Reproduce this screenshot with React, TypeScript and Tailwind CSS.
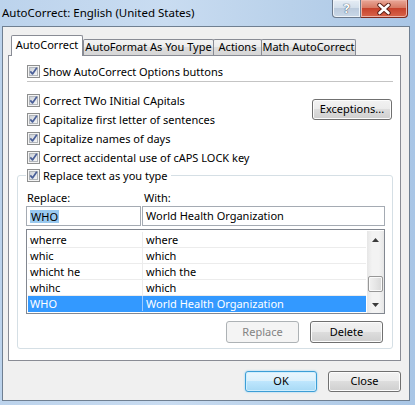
import React from "react";

function Check({ checked = true }: { checked?: boolean }) {
  return (
    <svg width="13" height="13" viewBox="0 0 13 13" className="shrink-0 block">
      <defs>
        <linearGradient id="cbg" x1="0" y1="0" x2="1" y2="1">
          <stop offset="0" stopColor="#cbcfd5" />
          <stop offset="1" stopColor="#f7f8f9" />
        </linearGradient>
      </defs>
      <rect x="0.5" y="0.5" width="12" height="12" fill="#f4f4f4" stroke="#8e8f8f" />
      <rect x="2.5" y="2.5" width="8" height="8" fill="url(#cbg)" stroke="#b1b5ba" />
      {checked && (
        <path d="M3.3 6.4 L5.5 8.9 L9.8 2.8" fill="none" stroke="#4a5f98" strokeWidth="1.7" strokeLinejoin="round" />
      )}
    </svg>
  );
}

function CheckRow({ label }: { label: string }) {
  return (
    <div className="h-[19px] flex items-center gap-[3px]">
      <Check />
      <span className="leading-none">{label}</span>
    </div>
  );
}

const btn =
  "flex items-center justify-center rounded-[3px] border border-[#707070] bg-[linear-gradient(#f2f2f2,#ebebeb_50%,#dddddd_50%,#cfcfcf)] shadow-[inset_0_0_0_1px_#fcfcfc] text-black";

export default function App() {
  const rows = [
    ["wherre", "where"],
    ["whic", "which"],
    ["whicht he", "which the"],
    ["whihc", "which"],
    ["WHO", "World Health Organization"],
  ];
  return (
    <div className="w-[415px] h-[405px] overflow-hidden bg-[linear-gradient(90deg,#bcd3ec,#c9dcf1_40%,#b9d1ea_70%,#a9c6e6)] font-['Noto_Sans'] text-[11px] text-black flex flex-col">
      {/* title bar */}
      <div className="h-[26px] shrink-0 flex items-start">
        <div className="pl-[2px] pt-[6px] text-[11.5px] leading-[14px] text-black">
          AutoCorrect: English (United States)
        </div>
        <div className="ml-auto mr-[7px] flex">
          <div className="w-[29px] h-[18px] rounded-bl-[4px] border border-t-0 border-[#6b7a8d] bg-[linear-gradient(#e6edf5,#d3dfeb_45%,#bccbdd_50%,#c9d8e8)] flex items-center justify-center shadow-[inset_0_0_0_1px_#eef3f8]">
            <span className="text-[13px] font-bold leading-none text-white [text-shadow:0_0_1px_#3a4a5e,0_0_1px_#3a4a5e]">?</span>
          </div>
          <div className="w-[47px] h-[18px] rounded-br-[4px] border border-t-0 border-l-0 border-[#7e2a1d] bg-[linear-gradient(#e9a898,#d77a64_45%,#c7432c_50%,#d8654b)] flex items-center justify-center shadow-[inset_0_0_0_1px_#eeb3a5]">
            <svg width="16" height="12" viewBox="0 0 16 12">
              <path d="M3.5 2 L12.5 10 M12.5 2 L3.5 10" stroke="#5a1e14" strokeWidth="4.4" strokeLinecap="round" />
              <path d="M3.5 2 L12.5 10 M12.5 2 L3.5 10" stroke="#ffffff" strokeWidth="2.6" strokeLinecap="round" />
            </svg>
          </div>
        </div>
      </div>

      {/* client area */}
      <div className="ml-[2px] w-[408px] h-[375px] shrink-0 border border-[#6f7f91] bg-[#f0f0f0] flex flex-col pt-[8px] pl-[5px]">
        {/* tabs */}
        <div className="h-[20px] flex items-end pl-[3px]">
          <div className="relative z-10 w-[72px] h-[21px] -mb-px border border-b-0 border-[#898c95] rounded-t-[2px] bg-white flex items-center justify-center pb-[2px]">
            AutoCorrect
          </div>
          <div className="w-[131px] h-[16px] border border-b-0 border-[#898c95] rounded-t-[2px] bg-[linear-gradient(#f3f3f3,#ebebeb_50%,#dddddd_50%,#d6d6d6)] flex items-center justify-center">
            AutoFormat As You Type
          </div>
          <div className="-ml-px w-[49px] h-[16px] border border-b-0 border-[#898c95] rounded-t-[2px] bg-[linear-gradient(#f3f3f3,#ebebeb_50%,#dddddd_50%,#d6d6d6)] flex items-center justify-center">
            Actions
          </div>
          <div className="-ml-px w-[95px] h-[16px] border border-b-0 border-[#898c95] rounded-t-[2px] bg-[linear-gradient(#f3f3f3,#ebebeb_50%,#dddddd_50%,#d6d6d6)] flex items-center justify-center">
            Math AutoCorrect
          </div>
        </div>

        {/* panel */}
        <div className="w-[393px] h-[306px] border border-[#898c95] bg-white flex flex-col">
          <div className="mt-[9px] pl-[18px] h-[13px] flex items-center gap-[3px]">
            <Check />
            <span className="leading-none">Show AutoCorrect Options buttons</span>
          </div>
          <div className="mt-[3px] ml-[18px] w-[366px] h-px bg-[#c4c4c4]" />

          <div className="mt-[9px] flex">
            <div className="pl-[18px] flex flex-col">
              <CheckRow label="Correct TWo INitial CApitals" />
              <CheckRow label="Capitalize first letter of sentences" />
              <CheckRow label="Capitalize names of days" />
              <CheckRow label="Correct accidental use of cAPS LOCK key" />
            </div>
            <div className={`${btn} ml-auto mr-[8px] mt-[8px] w-[80px] h-[21px]`}>Exceptions...</div>
          </div>

          <fieldset className="ml-[8px] w-[376px] h-[182px] border border-[#d5dfe5] rounded-[3px] p-0 m-0 min-w-0 flex flex-col">
            <legend className="ml-[8px] pl-[1px] pr-[3px] h-[16px] flex items-center gap-[3px] bg-white">
              <Check />
              <span className="leading-none">Replace text as you type</span>
            </legend>
            <div className="mt-[7px] ml-[8px] h-[14px] flex items-center">
              <span className="w-[116px] pl-[1px] leading-none">Replace:</span>
              <span className="pl-[2px] leading-none">With:</span>
            </div>
            <div className="mt-[2px] ml-[8px] flex gap-[1px]">
              <div className="w-[115px] h-[20px] border border-[#a5abb3] flex items-center pl-[3px]">
                <span className="bg-[#99c9ef] px-[1px] leading-[13px]">WHO</span>
              </div>
              <div className="w-[243px] h-[20px] border border-[#a5abb3] flex items-center pl-[3px]">
                World Health Organization
              </div>
            </div>
            <div className="mt-[3px] ml-[8px] w-[359px] h-[85px] border border-[#828790] flex pl-px pt-px">
              <div className="w-[338px] flex flex-col pt-px">
                {rows.map(([a, b], i) => {
                  const sel = i === rows.length - 1;
                  return (
                    <div
                      key={a}
                      className={`h-[16px] flex border-b ${sel ? "bg-[#3399ff] text-white border-[#3399ff]" : "border-[#ececec]"}`}
                    >
                      <div className={`w-[115px] border-r ${sel ? "border-[#9fcbff]" : "border-[#ececec]"} pl-[2px] flex items-center leading-none`}>
                        {a}
                      </div>
                      <div className="flex-1 pl-[3px] flex items-center leading-none">{b}</div>
                    </div>
                  );
                })}
              </div>
              <div className="ml-px w-[17px] h-[82px] bg-[linear-gradient(90deg,#e6e6e6,#f3f3f3_30%,#f3f3f3_70%,#e6e6e6)] flex flex-col items-center">
                <div className="h-[17px] flex items-center justify-center">
                  <svg width="7" height="4" viewBox="0 0 7 4"><path d="M0 4 L3.5 0 L7 4 Z" fill="#3c3c3c" /></svg>
                </div>
                <div className="mt-[28px] w-[15px] h-[16px] rounded-[2px] border border-[#979797] bg-[linear-gradient(90deg,#f1f1f1,#e6e6e6_50%,#d8d8d8)] shadow-[inset_0_0_0_1px_#fafafa]" />
                <div className="mt-[4px] h-[17px] flex items-center justify-center">
                  <svg width="7" height="4" viewBox="0 0 7 4"><path d="M0 0 L7 0 L3.5 4 Z" fill="#3c3c3c" /></svg>
                </div>
              </div>
            </div>
            <div className="mt-[7px] flex justify-end gap-[11px] pr-[9px]">
              <div className="w-[73px] h-[22px] rounded-[3px] border border-[#adb2b5] bg-[#f4f4f4] text-[#838383] flex items-center justify-center">
                Replace
              </div>
              <div className={`${btn} w-[73px] h-[22px]`}>Delete</div>
            </div>
          </fieldset>
        </div>

        <div className="mt-[10px] mr-[8px] flex justify-end gap-[11px]">
          <div className="w-[72px] h-[21px] rounded-[3px] border border-[#3c9ed6] bg-[linear-gradient(#eaf6fd,#d9f0fc_50%,#bee6fd_50%,#a7d9f5)] shadow-[inset_0_0_0_1px_#d0eefd,0_0_2px_#7fcbf5] flex items-center justify-center">
            OK
          </div>
          <div className={`${btn} w-[73px] h-[21px]`}>Close</div>
        </div>
      </div>
    </div>
  );
}
